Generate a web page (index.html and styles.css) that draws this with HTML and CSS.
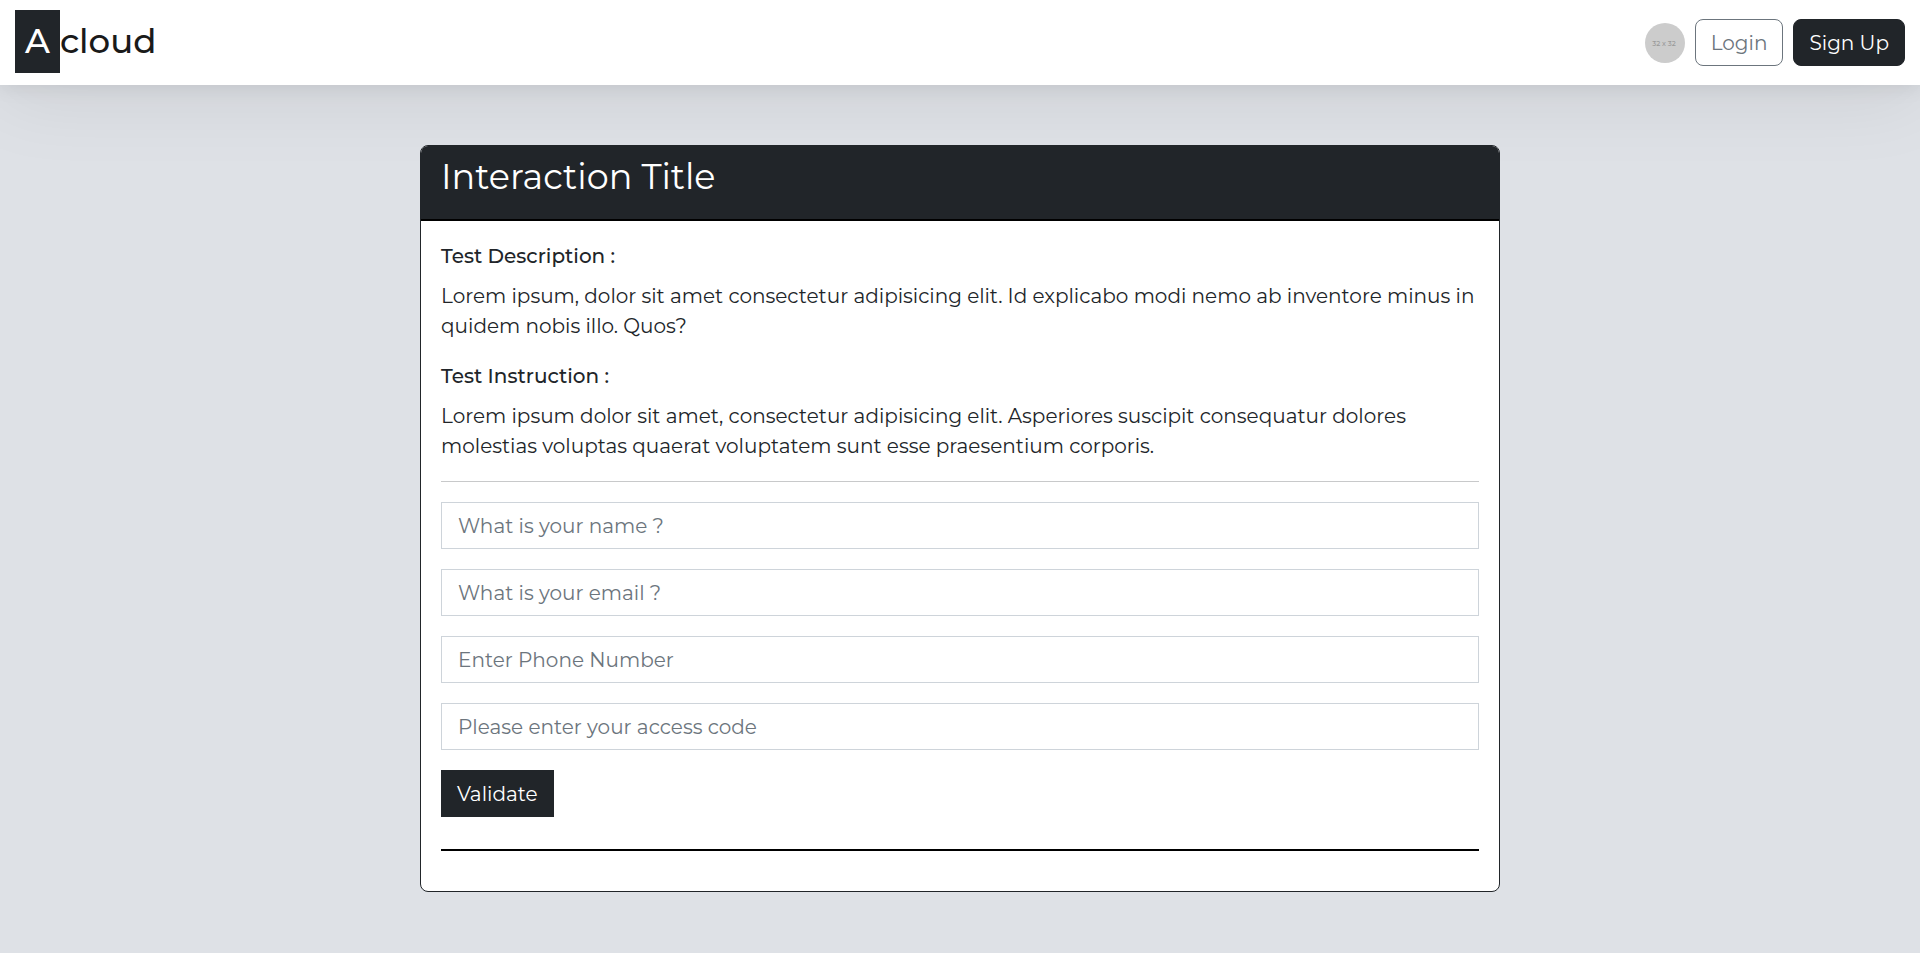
FILE: index.html
```html
<!DOCTYPE html>
<html lang="en">
<head>
  <meta charset="utf-8">
  <meta name="viewport" content="width=device-width, initial-scale=1">
  <title>Acloud</title>
  <link rel="stylesheet" href="styles.css">
</head>
<body>
  <header class="navbar">
    <a class="brand" href="#"><span class="brand-mark">A</span><span class="brand-name">cloud</span></a>
    <nav class="nav-actions">
      <svg class="avatar" viewBox="0 0 40 40" role="img" aria-label="Profile">
        <circle cx="20" cy="20" r="20" fill="#ccc"/>
        <text class="avatar-text" x="19" y="23" text-anchor="middle">32 x 32</text>
      </svg>
      <button class="btn btn-outline" type="button">Login</button>
      <button class="btn btn-dark" type="button">Sign Up</button>
    </nav>
  </header>
  <main class="page">
    <section class="card">
      <div class="card-header">
        <h1 class="card-title">Interaction Title</h1>
      </div>
      <div class="card-body">
        <h2 class="label">Test Description :</h2>
        <p class="text">Lorem ipsum, dolor sit amet consectetur adipisicing elit. Id explicabo modi nemo ab inventore minus in quidem nobis illo. Quos?</p>
        <h2 class="label">Test Instruction :</h2>
        <p class="text">Lorem ipsum dolor sit amet, consectetur adipisicing elit. Asperiores suscipit consequatur dolores molestias voluptas quaerat voluptatem sunt esse praesentium corporis.</p>
        <hr class="divider">
        <form class="form">
          <input class="field" type="text" placeholder="What is your name ?" aria-label="Name">
          <input class="field" type="email" placeholder="What is your email ?" aria-label="Email">
          <input class="field" type="tel" placeholder="Enter Phone Number" aria-label="Phone number">
          <input class="field" type="text" placeholder="Please enter your access code" aria-label="Access code">
          <button class="btn btn-dark btn-square" type="button">Validate</button>
        </form>
        <hr class="divider-dark">
      </div>
    </section>
  </main>
</body>
</html>
```
FILE: styles.css
```css
* {
  box-sizing: border-box;
}

body {
  margin: 0;
  background: #dee1e6;
  color: #212529;
  font-family: Montserrat, Inter, "Open Sans", sans-serif;
  font-size: 20px;
  font-weight: 400;
  line-height: 30px;
}

.navbar {
  display: flex;
  align-items: center;
  justify-content: space-between;
  padding: 10px 15px 12px;
  background: #fff;
  box-shadow: 0 0 20px rgba(0, 0, 0, 0.1), 0 12px 80px rgba(0, 0, 0, 0.08);
}

.brand {
  display: flex;
  align-items: center;
  color: #1a1a1a;
  font-size: 34px;
  font-weight: 500;
  line-height: 43px;
  text-decoration: none;
}

.brand-mark {
  padding: 10px;
  background: #212529;
  color: #fff;
}

.nav-actions {
  display: flex;
  align-items: center;
  gap: 10px;
  padding-top: 2px;
}

.avatar {
  width: 40px;
  height: 40px;
}

.avatar-text {
  fill: #999;
  font-size: 7px;
  font-weight: 500;
}

.btn {
  padding: 8px 15px 7px;
  border: 1px solid #212529;
  border-radius: 8px;
  font: inherit;
}

.btn-outline {
  border-color: #6c757d;
  background: #fff;
  color: #6c757d;
}

.btn-dark {
  background: #212529;
  color: #fff;
}

.btn-square {
  border-radius: 0;
}

.page {
  padding: 60px 20px;
}

.card {
  max-width: 1080px;
  margin: 0 auto;
  border: 1px solid #212529;
  border-radius: 8px;
  background: #fff;
  overflow: hidden;
}

.card-header {
  padding: 10px 20px 21px;
  border-bottom: 2px solid #000;
  background: #212529;
  color: #fff;
}

.card-title {
  margin: 0;
  font-size: 35px;
  font-weight: 400;
  line-height: 42px;
}

.card-body {
  padding: 20px 20px 40px;
}

.label {
  margin: 0 0 10px;
  font-size: 20px;
  font-weight: 500;
  line-height: 30px;
}

.text {
  margin: 0 0 20px;
}

.divider {
  height: 1px;
  margin: 20px 0;
  border: 0;
  background: #c8c9ca;
}

.form {
  display: flex;
  flex-direction: column;
  align-items: flex-start;
  gap: 20px;
}

.field {
  width: 100%;
  padding: 8px 16px 7px;
  border: 1px solid #ced4da;
  border-radius: 0;
  background: #fff;
  color: #212529;
  font: inherit;
}

.field::placeholder {
  color: #6c757d;
  opacity: 1;
}

.divider-dark {
  height: 2px;
  margin: 32px 0 0;
  border: 0;
  background: #000;
}
```
